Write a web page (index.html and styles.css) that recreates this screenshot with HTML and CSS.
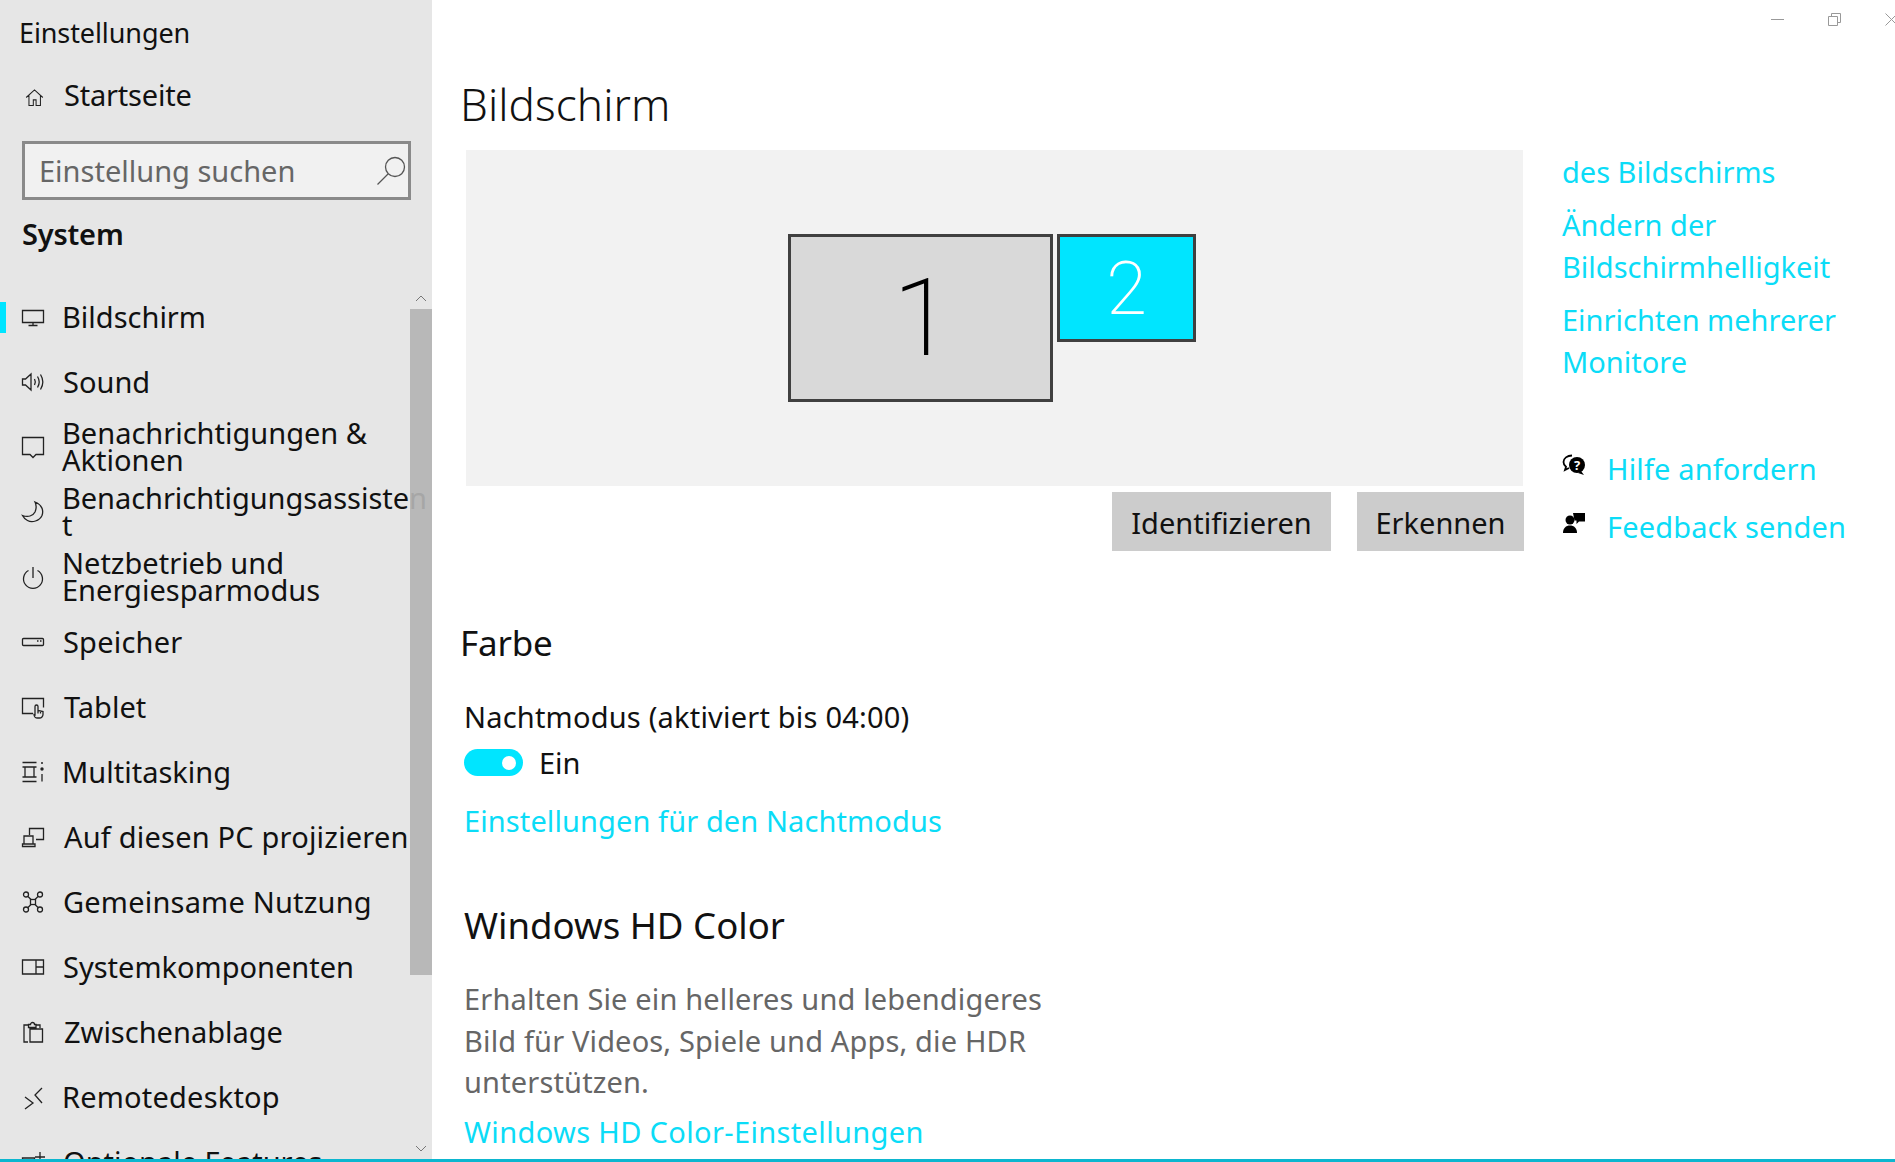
FILE: index.html
```html
<!DOCTYPE html>
<html lang="de">
<head>
<meta charset="utf-8">
<title>Einstellungen</title>
<link rel="stylesheet" href="styles.css">
</head>
<body>
<div class="app">
  <aside class="sidebar">
    <div class="app-title">Einstellungen</div>
    <div class="home">
      <svg class="home-icon" viewBox="0 0 24 24"><path d="M1.500 12 12 2.500 22.500 12M5 9.500V22h5.500v-7h3.500v7H19.500V9.500"/></svg>
      <span class="home-label">Startseite</span>
    </div>
    <div class="search">
      <span>Einstellung suchen</span>
      <svg class="search-icon" viewBox="0 0 30 30"><circle cx="19" cy="11" r="9.500"/><path d="M12 18 1.500 28.500"/></svg>
    </div>
    <div class="group">System</div>
    <nav class="nav">
      <div class="item active"><svg class="ico" viewBox="0 0 24 24"><path d="M1.500 5.500h21v12h-21zM12 17.500v3M7.500 20.500h9"/></svg><span class="label">Bildschirm</span></div>
      <div class="item"><svg class="ico" viewBox="0 0 24 24"><path d="M1.500 9v6h3l5.500 5V4L4.500 9zM13.500 9c1 1.800 1 4.200 0 6M16.500 6.500c2 3.200 2 7.800 0 11M19.500 4.500c2.800 4.500 2.800 10.500 0 15"/></svg><span class="label nudge1">Sound</span></div>
      <div class="item"><svg class="ico" viewBox="0 0 24 24"><path d="M1.500 2.500h21v17h-7.500L12 22.500 9 19.500H1.500z"/></svg><span class="label two">Benachrichtigungen &amp;<br>Aktionen</span></div>
      <div class="item"><svg class="ico" viewBox="0 0 24 24"><path d="M14 2c6.500 2.500 9 8 7 13.500-2.500 5.500-10 7.500-14.500 5-2-1-4-3-5-5 5.500 2 10.500.5 12.500-3.500 1.500-3.500 1.500-7 0-10z"/></svg><span class="label two tight">Benachrichtigungsassiste<span class="fade">n</span><br>t</span></div>
      <div class="item"><svg class="ico" viewBox="0 0 24 24"><path d="M12 2v11M7.500 5.500a9.500 9.500 0 1 0 9 0"/></svg><span class="label two">Netzbetrieb und<br>Energiesparmodus</span></div>
      <div class="item"><svg class="ico" viewBox="0 0 24 24"><path d="M2.500 8.500h19a1 1 0 0 1 1 1v5a1 1 0 0 1-1 1h-19a1 1 0 0 1-1-1v-5a1 1 0 0 1 1-1zM16 11h1.500M19 11h1.500"/></svg><span class="label nudge1 wide">Speicher</span></div>
      <div class="item"><svg class="ico" viewBox="0 0 24 24"><path d="M12 18.500H1.500v-15h21v9M14 20v-8.500a1.500 1.500 0 0 1 3 0v4l5 1v3a3.500 3.500 0 0 1-3.500 3.500H16.500A3.500 3.500 0 0 1 13 19.500zM17 15.500v3M19.500 16v2.500"/></svg><span class="label nudge2">Tablet</span></div>
      <div class="item"><svg class="ico" viewBox="0 0 24 24"><path d="M1.500 2.500h14M1.500 21.500h14M4 7h9v10H4zM1.500 7H4M1.500 17H4M13 7h2.500M13 17h2.500M21 14v7.500"/><circle class="dot" cx="21" cy="9" r="1.700"/><circle class="dot" cx="21" cy="3" r="1"/></svg><span class="label">Multitasking</span></div>
      <div class="item"><svg class="ico" viewBox="0 0 24 24"><path d="M8.500 10V3.500h14v11H15M12 11h-9v8h9zM1.500 21.500h12.500M1.500 19h12.500v2.500H1.500z"/></svg><span class="label nudge2 wide">Auf diesen PC projizieren</span></div>
      <div class="item"><svg class="ico" viewBox="0 0 24 24"><circle cx="5" cy="4.500" r="2.500"/><circle cx="19" cy="4.500" r="2.500"/><circle cx="5" cy="19.500" r="2.500"/><circle cx="19" cy="19.500" r="2.500"/><rect x="9.500" y="9.500" width="5" height="5"/><path d="M7 6.500l3 3M17 6.500l-3 3M7 17.500l3-3M17 17.500l-3-3"/></svg><span class="label nudge1 wide">Gemeinsame Nutzung</span></div>
      <div class="item"><svg class="ico" viewBox="0 0 24 24"><path d="M1.500 5h21v14h-21zM15 5v14M15 12h7.500"/></svg><span class="label nudge1">Systemkomponenten</span></div>
      <div class="item"><svg class="ico" viewBox="0 0 24 24"><path d="M7 5H3v17h4M15 5h4v3M7.500 7.500V4.500H9.500a2 2 0 0 1 4 0h1.500v3zM9 9h12.500v13H9z"/></svg><span class="label nudge2">Zwischenablage</span></div>
      <div class="item"><svg class="ico" viewBox="0 0 24 24"><path d="M4 12l8 6-8 6M21 3l-7 7 7 8"/></svg><span class="label wide">Remotedesktop</span></div>
      <div class="item"><svg class="ico" viewBox="0 0 24 24"><path d="M1.500 8h12v12h-12zM19 2v10M14 7h10"/></svg><span class="label nudge1">Optionale Features</span></div>
    </nav>
    <div class="scrollbar">
      <svg class="arrow up" viewBox="0 0 12 7"><path d="M1 6l5-5 5 5"/></svg>
      <div class="thumb"></div>
      <svg class="arrow down" viewBox="0 0 12 7"><path d="M1 1l5 5 5-5"/></svg>
    </div>
  </aside>

  <main class="main">
    <div class="window-controls">
      <svg class="wc" viewBox="0 0 13 13"><path d="M0 6.500h13"/></svg>
      <svg class="wc" viewBox="0 0 13 13"><path d="M.5 3.500h9v9h-9zM3.500 3.500V.5h9v9h-3"/></svg>
      <svg class="wc" viewBox="0 0 13 13"><path d="M.5.5l12 12M12.500.5l-12 12"/></svg>
    </div>
    <h1 class="page-title">Bildschirm</h1>
    <div class="top-row">
      <div class="display-col">
        <div class="preview">
          <div class="monitor primary">1</div>
          <div class="monitor secondary">2</div>
        </div>
        <div class="buttons">
          <div class="btn btn-id">Identifizieren</div>
          <div class="btn btn-er">Erkennen</div>
        </div>
      </div>
      <div class="aside">
        <a class="link aside-first">des Bildschirms</a>
        <a class="link aside-block">Ändern der<br>Bildschirmhelligkeit</a>
        <a class="link aside-block">Einrichten mehrerer<br>Monitore</a>
        <div class="help first">
          <svg class="help-ico" viewBox="0 0 24 24"><path class="fill-none" d="M10 1.500c-4.800 0-8.500 2.800-8.500 6.500 0 2 1 3.600 2.500 4.800l-1 3.200 4-2"/><circle class="fill" cx="15" cy="11" r="8"/><path class="fill" d="M19 17l3 4-6-2z"/><text class="qm" x="15" y="15.500">?</text></svg>
          <a class="link help-link">Hilfe anfordern</a>
        </div>
        <div class="help">
          <svg class="help-ico" viewBox="0 0 24 24"><circle class="fill" cx="8" cy="8" r="4.500"/><path class="fill" d="M1 21c0-5 3-7.500 7-7.500s7 2.500 7 7.500z"/><path class="fill" d="M11 1h12v8.500h-6l-2.500 2.500v-3.500H12.500z"/></svg>
          <a class="link help-link">Feedback senden</a>
        </div>
      </div>
    </div>
    <div class="content">
      <h2 class="section-title farbe">Farbe</h2>
      <div class="setting">Nachtmodus (aktiviert bis 04:00)</div>
      <div class="toggle-row"><span class="toggle"><span class="knob"></span></span><span>Ein</span></div>
      <a class="link night-link">Einstellungen für den Nachtmodus</a>
      <h2 class="section-title hd">Windows HD Color</h2>
      <p class="desc">Erhalten Sie ein helleres und lebendigeres<br>Bild für Videos, Spiele und Apps, die HDR<br>unterstützen.</p>
      <a class="link hd-link">Windows HD Color-Einstellungen</a>
    </div>
  </main>
</div>
</body>
</html>
```

FILE: styles.css
```css
* { box-sizing: border-box; }
html, body { margin: 0; height: 100%; overflow: hidden; }
body {
  font-family: "Noto Sans", "Open Sans", sans-serif;
  font-size: 29px;
  letter-spacing: 0;
  color: #111;
  background: #fff;
}
.app {
  display: flex;
  height: 1162px;
  border-bottom: 3px solid #0cb6cf;
  overflow: hidden;
}

/* sidebar */
.sidebar {
  position: relative;
  flex: 0 0 432px;
  height: 100%;
  background: #e6e6e6;
  overflow: hidden;
}
.app-title {
  height: 66px;
  padding-left: 19px;
  font-size: 27px;
  letter-spacing: -0.1px;
  line-height: 66px;
}
.home {
  display: flex;
  align-items: center;
  height: 56px;
  padding-left: 25px;
  gap: 20px;
}
.home-label { letter-spacing: -0.2px; }
.home-icon { width: 19px; height: 19px; margin-top: 6px; }
.home-icon path, .ico path, .ico rect, .ico circle, .search-icon circle, .search-icon path {
  fill: none;
  stroke: #222;
  stroke-width: 1.3;
}
.ico circle.dot { fill: #222; stroke: none; }
.search {
  display: flex;
  align-items: center;
  justify-content: space-between;
  width: 389px;
  height: 59px;
  margin: 19px 0 0 22px;
  padding: 0 2px 0 14px;
  border: 3px solid #8a8a8a;
  background: #f1f1f1;
  color: #666;
}
.search-icon { width: 30px; height: 30px; margin-left: -30px; }
.search-icon circle, .search-icon path { stroke: #555; stroke-width: 1.300; }
.group {
  height: 68px;
  padding-left: 22px;
  font-weight: 600;
  letter-spacing: -0.2px;
  line-height: 68px;
}
.nav { margin-top: 16px; }
.item {
  position: relative;
  display: flex;
  align-items: center;
  height: 65px;
  padding-left: 21px;
  gap: 17px;
  white-space: nowrap;
}
.item.active::before {
  content: "";
  position: absolute;
  left: 0;
  top: 18px;
  width: 6px;
  height: 31px;
  background: #00e5ff;
}
.ico { flex: 0 0 24px; width: 24px; height: 24px; overflow: visible; }
.two { margin-top: -2px; line-height: 27px; }
.tight { letter-spacing: -0.05px; }
.wide { letter-spacing: 0.2px; }
.nudge1 { margin-left: 1px; }
.nudge2 { margin-left: 2px; }
.fade { position: relative; z-index: 2; color: #a6a6a6; }
.scrollbar {
  position: absolute;
  top: 290px;
  right: 0;
  bottom: 0;
  width: 22px;
}
.thumb {
  position: absolute;
  top: 19px;
  left: 0;
  right: 0;
  height: 666px;
  background: #b8b8b8;
}
.arrow {
  position: absolute;
  left: 5px;
  width: 12px;
  height: 7px;
}
.arrow path { fill: none; stroke: #777; stroke-width: 1; }
.arrow.up { top: 5px; }
.arrow.down { bottom: 7px; }

/* main */
.main {
  flex: 1;
  position: relative;
  min-width: 0;
}
.window-controls {
  position: absolute;
  top: 13px;
  right: -3px;
  display: flex;
  gap: 44px;
}
.wc { width: 13px; height: 13px; }
.wc path { fill: none; stroke: #999; stroke-width: 1; }
.page-title {
  margin: 66px 0 0 28px;
  height: 84px;
  font-size: 44px;
  font-weight: 300;
  line-height: 76px;
  letter-spacing: 0.1px;
}
.top-row {
  display: flex;
  margin-left: 33px;
  gap: 39px;
}
.display-col { flex: 0 0 1058px; }
.preview {
  display: flex;
  align-items: flex-start;
  gap: 4px;
  height: 336px;
  margin-left: 1px;
  padding: 84px 0 0 322px;
  background: #f2f2f2;
}
.monitor {
  display: flex;
  align-items: center;
  justify-content: center;
  border: 3px solid #404040;
  font-family: "Roboto", sans-serif;
  font-weight: 200;
  letter-spacing: 0;
}
.primary {
  width: 265px;
  height: 168px;
  padding-left: 4px;
  background: #d9d9d9;
  color: #000;
  font-size: 108px;
}
.secondary {
  width: 139px;
  height: 108px;
  background: #00e5ff;
  color: #fff;
  font-size: 74px;
}
.buttons {
  display: flex;
  justify-content: flex-end;
  gap: 26px;
  margin: 6px -1px 0 0;
}
.btn {
  display: flex;
  align-items: center;
  justify-content: center;
  height: 59px;
  padding-top: 2px;
  background: #ccc;
}
.btn-id { width: 219px; }
.btn-er { width: 167px; }
.aside { flex: 1; min-width: 0; }
.link { display: block; color: #0bdcf7; }
.aside-first { line-height: 42px; margin-top: 1px; }
.aside-block { line-height: 42px; margin-top: 11px; }
.help {
  display: flex;
  align-items: center;
  gap: 21px;
  height: 58px;
}
.help.first { margin-top: 56px; }
.help-link { letter-spacing: 0.15px; }
.help-ico { width: 24px; height: 24px; flex: 0 0 24px; margin-top: -4px; }
.fill { fill: #000; }
.fill-none { fill: none; stroke: #000; stroke-width: 1.800; }
.qm {
  fill: #fff;
  font-family: "Noto Sans", sans-serif;
  font-size: 13px;
  font-weight: 700;
  text-anchor: middle;
  letter-spacing: 0;
}
.content { margin-left: 32px; }
.section-title { margin: 0; font-weight: 400; }
.farbe { height: 50px; margin-top: 63px; margin-left: -4px; font-size: 35px; letter-spacing: -0.2px; line-height: 50px; }
.setting { height: 40px; margin-top: 29px; letter-spacing: 0.2px; line-height: 40px; }
.toggle-row {
  display: flex;
  align-items: center;
  gap: 16px;
  height: 27px;
  margin-top: 12px;
}
.toggle {
  display: flex;
  align-items: center;
  justify-content: flex-end;
  width: 59px;
  height: 27px;
  padding-right: 7px;
  border-radius: 14px;
  background: #00e5ff;
}
.knob { width: 14px; height: 14px; border-radius: 50%; background: #fff; }
.night-link { height: 40px; margin-top: 25px; letter-spacing: 0.1px; line-height: 40px; }
.hd { height: 50px; margin-top: 59px; font-size: 36.600px; line-height: 50px; }
.desc {
  margin: 28px 0 0;
  color: #666;
  letter-spacing: 0.15px;
  line-height: 41.500px;
}
.hd-link { height: 40px; margin-top: 9px; letter-spacing: 0.36px; line-height: 40px; }
```
